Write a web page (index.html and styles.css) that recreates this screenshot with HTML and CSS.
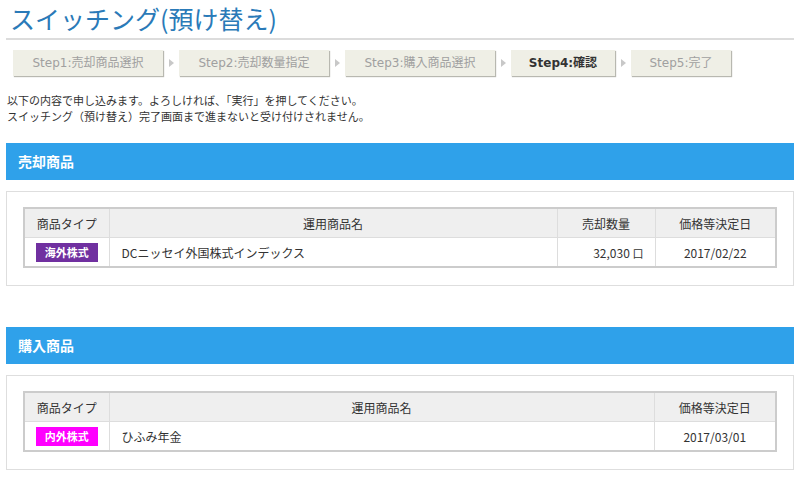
FILE: index.html
```html
<!DOCTYPE html>
<html lang="ja">
<head>
<meta charset="utf-8">
<title>スイッチング(預け替え)</title>
<link rel="stylesheet" href="styles.css">
</head>
<body>
<h1 class="page-title">スイッチング(預け替え)</h1>
<div class="steps">
  <div class="step step-w1">Step1:売却商品選択</div>
  <span class="arrow"></span>
  <div class="step step-w1">Step2:売却数量指定</div>
  <span class="arrow"></span>
  <div class="step step-w1">Step3:購入商品選択</div>
  <span class="arrow"></span>
  <div class="step step-w4 current">Step4:確認</div>
  <span class="arrow"></span>
  <div class="step step-w5">Step5:完了</div>
</div>
<p class="lead">以下の内容で申し込みます。よろしければ、「実行」を押してください。<br>スイッチング（預け替え）完了画面まで進まないと受け付けされません。</p>

<h2 class="section-bar">売却商品</h2>
<div class="panel">
  <table class="grid">
    <colgroup><col class="c-type"><col><col class="c-qty"><col class="c-date"></colgroup>
    <thead>
      <tr><th>商品タイプ</th><th>運用商品名</th><th>売却数量</th><th>価格等決定日</th></tr>
    </thead>
    <tbody>
      <tr><td class="center"><span class="badge badge-foreign">海外株式</span></td><td class="name">DCニッセイ外国株式インデックス</td><td class="num">32,030 <span class="unit">口</span></td><td class="center">2017/02/22</td></tr>
    </tbody>
  </table>
</div>

<h2 class="section-bar second">購入商品</h2>
<div class="panel">
  <table class="grid">
    <colgroup><col class="c-type"><col><col class="c-date2"></colgroup>
    <thead>
      <tr><th>商品タイプ</th><th>運用商品名</th><th>価格等決定日</th></tr>
    </thead>
    <tbody>
      <tr><td class="center"><span class="badge badge-mixed">内外株式</span></td><td class="name">ひふみ年金</td><td class="center">2017/03/01</td></tr>
    </tbody>
  </table>
</div>
</body>
</html>
```

FILE: styles.css
```css
html, body {
  margin: 0;
  padding: 0;
  background: #fff;
}
body {
  padding: 0 6px;
  font-family: "Noto Sans CJK JP", "DejaVu Sans", sans-serif;
  color: #333;
}
.page-title {
  margin: 0;
  padding: 2px 0 0 4px;
  height: 36px;
  line-height: 32px;
  font-size: 25px;
  font-weight: normal;
  color: #2a7ab8;
  border-bottom: 2px solid #dcdcdc;
}
.steps {
  display: flex;
  align-items: center;
  margin-top: 10px;
  padding-left: 7px;
  height: 26px;
}
.step {
  height: 26px;
  line-height: 26px;
  text-align: center;
  background: #efefe6;
  box-shadow: 1px 1px 1px #b8b8b0;
  font-family: "DejaVu Sans", "Noto Sans CJK JP", sans-serif;
  font-size: 12px;
  color: #a0a0a0;
  white-space: nowrap;
}
.step-w1 { width: 150px; }
.step-w4 { width: 104px; }
.step-w5 { width: 100px; }
.step.current {
  color: #333;
  font-weight: bold;
}
.arrow {
  width: 16px;
  display: flex;
  justify-content: center;
}
.arrow::before {
  content: "";
  border-left: 5px solid #c8c8c8;
  border-top: 4px solid transparent;
  border-bottom: 4px solid transparent;
}
.lead {
  margin: 16px 0 0 1px;
  font-size: 11px;
  line-height: 16px;
  color: #333;
}
.section-bar {
  margin: 19px 0 0;
  height: 37px;
  line-height: 37px;
  padding-left: 12px;
  background: #2fa1ea;
  color: #fff;
  font-size: 14px;
  font-weight: bold;
}
.section-bar.second {
  margin-top: 41px;
}
.panel {
  margin-top: 11px;
  border: 1px solid #dedede;
  padding: 15px 16px 17px;
}
.grid {
  width: 100%;
  border-collapse: collapse;
  border: 2px solid #cccccc;
  font-size: 12px;
  color: #333;
}
.grid th, .grid td {
  border: 1px solid #dddddd;
  height: 28px;
  padding: 0 11px;
}
.grid th {
  background: #efefef;
  font-weight: normal;
  text-align: center;
}
.c-type { width: 85px; }
.c-qty { width: 98px; }
.c-date { width: 121px; }
.c-date2 { width: 122px; }
.grid td.center { text-align: center; padding: 0; }
.grid td.name { padding-left: 12px; }
.grid td.num { text-align: right; }
.unit { font-size: 11px; }
.badge {
  display: inline-block;
  width: 62px;
  height: 19px;
  line-height: 19px;
  vertical-align: middle;
  color: #fff;
  font-size: 11px;
  font-weight: bold;
  text-align: center;
}
.badge-foreign { background: #7030a0; }
.badge-mixed { background: #ff00ff; }
```
